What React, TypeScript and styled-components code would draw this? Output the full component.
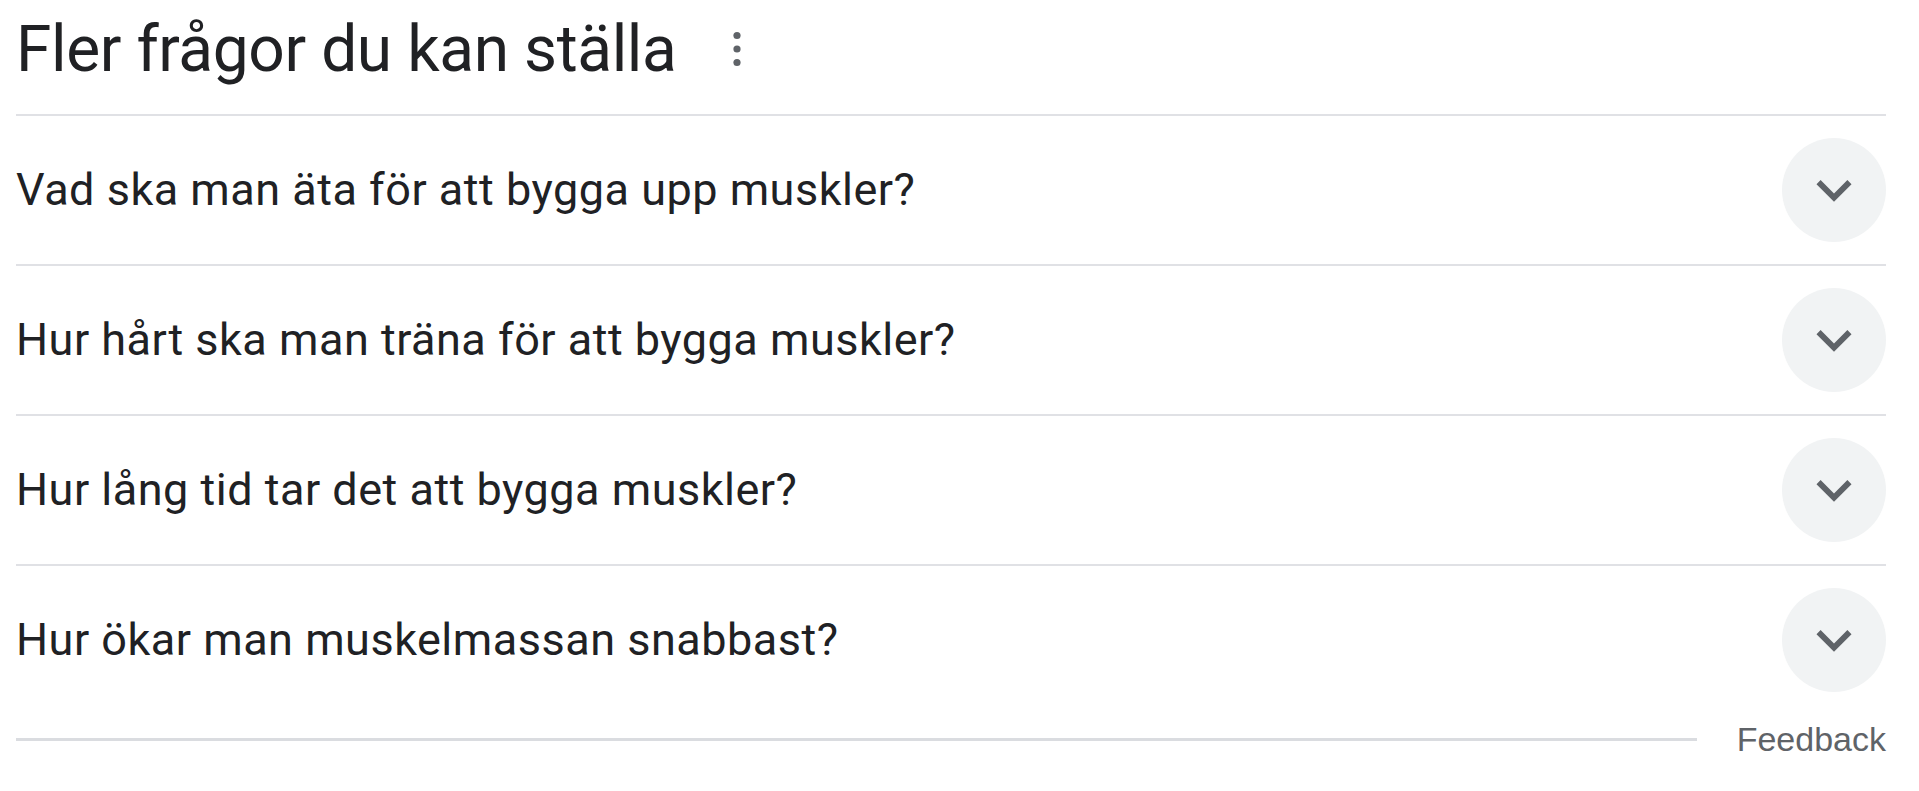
import styled, { createGlobalStyle } from "styled-components";

const GlobalStyle = createGlobalStyle`
  html, body {
    margin: 0;
    padding: 0;
    background: #ffffff;
  }
  body {
    font-family: Roboto, "Noto Sans", Arial, sans-serif;
    color: #202124;
  }
`;

const questions = [
  "Vad ska man äta för att bygga upp muskler?",
  "Hur hårt ska man träna för att bygga muskler?",
  "Hur lång tid tar det att bygga muskler?",
  "Hur ökar man muskelmassan snabbast?",
];

const App = () => {
  return (
    <>
      <GlobalStyle />
      <Wrapper>
        <Header>
          <Title>Fler frågor du kan ställa</Title>
          <MoreButton aria-label="Fler alternativ">
            <svg width="10" height="40" viewBox="0 0 10 40">
              <circle cx="5" cy="6.5" r="3.6" fill="#5f6368" />
              <circle cx="5" cy="20" r="3.6" fill="#5f6368" />
              <circle cx="5" cy="33.5" r="3.6" fill="#5f6368" />
            </svg>
          </MoreButton>
        </Header>
        {questions.map((q) => (
          <Row key={q}>
            <Question>{q}</Question>
            <Toggle aria-label="Visa svar">
              <svg width="70" height="70" viewBox="0 0 24 24">
                <path
                  d="M16.59 8.59L12 13.17 7.41 8.59 6 10l6 6 6-6z"
                  fill="#5f6368"
                />
              </svg>
            </Toggle>
          </Row>
        ))}
        <FeedbackRow>
          <Rule />
          <FeedbackLink>Feedback</FeedbackLink>
        </FeedbackRow>
      </Wrapper>
    </>
  );
};

export default App;

const Wrapper = styled.div`
  width: 1870px;
  margin-left: 16px;
  display: flex;
  flex-direction: column;
`;

const Header = styled.div`
  height: 114px;
  padding-bottom: 16px;
  box-sizing: border-box;
  display: flex;
  align-items: center;
`;

const Title = styled.h2`
  margin: 0;
  font-size: 64px;
  font-weight: 400;
  color: #202124;
  letter-spacing: -0.4px;
`;

const MoreButton = styled.div`
  display: flex;
  align-items: center;
  justify-content: center;
  margin-left: 56px;
  height: 40px;
`;

const Row = styled.div`
  height: 150px;
  box-sizing: border-box;
  border-top: 2px solid #e0e1e5;
  display: flex;
  align-items: center;
  justify-content: space-between;
`;

const Question = styled.span`
  font-size: 45px;
  color: #202124;
  line-height: 1.3;
  letter-spacing: 0.5px;
`;

const Toggle = styled.div`
  width: 104px;
  height: 104px;
  border-radius: 50%;
  background: #f1f3f4;
  display: flex;
  align-items: center;
  justify-content: center;
`;

const FeedbackRow = styled.div`
  height: 50px;
  display: flex;
  align-items: center;
  gap: 40px;
`;

const Rule = styled.div`
  flex: 1;
  height: 3px;
  background: #dadce0;
`;

const FeedbackLink = styled.span`
  font-family: "Liberation Sans", Arial, sans-serif;
  font-size: 34px;
  color: #5f6368;
`;
